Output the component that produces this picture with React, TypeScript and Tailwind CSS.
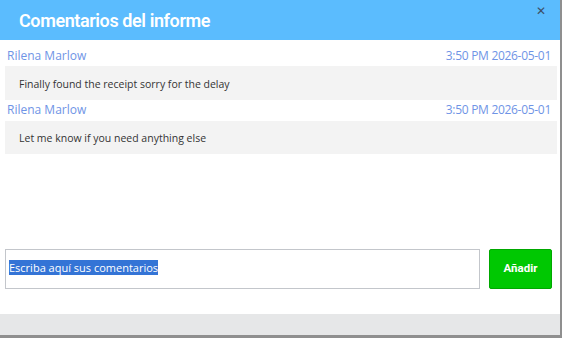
import React from "react";

const comments = [
  { name: "Rilena Marlow", date: "3:50 PM 2026-05-01", text: "Finally found the receipt sorry for the delay" },
  { name: "Rilena Marlow", date: "3:50 PM 2026-05-01", text: "Let me know if you need anything else" },
];

export default function App() {
  return (
    <div className="w-[562px] h-[338px] bg-[#8f8f8f] overflow-hidden" style={{ fontFamily: '"Open Sans", "Noto Sans", sans-serif' }}>
      <div className="w-[560px] h-[335px] bg-white flex flex-col">
        <div className="h-[40px] bg-[#5bbcfe] flex items-start justify-between shrink-0">
          <h1 className="text-white font-semibold text-[18px] leading-none pl-[19px] pt-[12px] tracking-[-0.4px]" style={{ fontFamily: 'Roboto, "Open Sans", sans-serif' }}>Comentarios del informe</h1>
          <span className="text-[#3d4f66] text-[12px] leading-none pr-[14px] pt-[5px]">✕</span>
        </div>
        <div className="flex-1 flex flex-col pt-[5px]">
          {comments.map((c, i) => (
            <div key={i} className="flex flex-col">
              <div className="h-[21px] flex items-center justify-between pl-[7px] pr-[9px] text-[#6f94e6] text-[12px]">
                <span>{c.name}</span>
                <span className="tracking-[-0.3px]">{c.date}</span>
              </div>
              <div className="ml-[5px] mr-[3px] h-[33.5px] bg-[#f3f3f3] flex items-center pl-[14px] pt-[4px] text-[#333] text-[10.5px]">
                {c.text}
              </div>
            </div>
          ))}
        </div>
        <div className="flex items-stretch gap-[9px] pl-[5px] pr-[8px] pb-[25px] shrink-0">
          <div className="flex-1 h-[40px] border border-[#c3c6cb] px-[3px] pt-[4px]">
            <span className="bg-[#3474d6] text-white text-[11px] leading-[15px] inline-block">Escriba aquí sus comentarios</span>
          </div>
          <button className="w-[63px] h-[40px] bg-[#00c802] border border-[#00a800] rounded-[2px] text-white font-bold text-[11.5px]" style={{ fontFamily: 'Roboto, "Open Sans", sans-serif' }}>Añadir</button>
        </div>
        <div className="h-[21px] bg-[#e6e7e8] shrink-0"></div>
      </div>
    </div>
  );
}
